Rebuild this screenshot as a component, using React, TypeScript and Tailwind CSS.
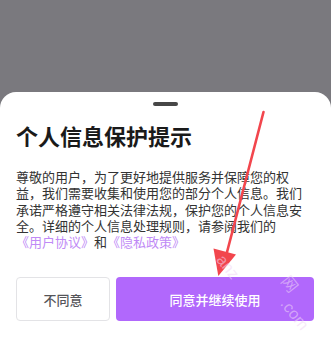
import React from "react";

export default function App() {
  return (
    <div
      className="relative w-[331px] h-[349px] overflow-hidden bg-[#7a797e] flex flex-col"
      style={{ fontFamily: '"Noto Sans CJK SC", "Noto Sans", sans-serif' }}
    >
      <div className="h-[92px] shrink-0" />
      <div className="flex-1 bg-white rounded-t-[16px] flex flex-col">
        <div className="mt-[10px] mx-auto w-[25px] h-[4px] rounded-full bg-[#474747]" />
        <h1 className="mt-[16px] px-[16px] text-[22px] leading-[26px] font-bold text-[#1a1a1a]">
          个人信息保护提示
        </h1>
        <div className="mt-[21px] pl-[16px] pr-[24px] text-[13px] leading-[16.3px] text-[#333333]">
          <p>
            尊敬的用户，为了更好地提供服务并保障您的权益，我们需要收集和使用您的部分个人信息。我们承诺严格遵守相关法律法规，保护您的个人信息安全。详细的个人信息处理规则，请参阅我们的
          </p>
          <div className="flex h-[16.3px] items-center">
            <span className="text-[#c08af6] leading-[16.3px]">《用户协议》</span>
            <span className="leading-[16.3px]">和</span>
            <span className="text-[#c08af6] leading-[16.3px]">《隐私政策》</span>
          </div>
        </div>
        <div className="mt-[27px] pl-[16px] pr-[17px] flex gap-[6px]">
          <button className="w-[94px] h-[44px] rounded-[4px] border border-[#e3e3e6] bg-white text-[13px] font-medium text-[#555559]">
            不同意
          </button>
          <button className="flex-1 h-[44px] rounded-[4px] bg-[#b168fc] text-[13px] font-medium text-white">
            同意并继续使用
          </button>
        </div>
      </div>

      <svg className="absolute inset-0 pointer-events-none" width="331" height="349" viewBox="0 0 331 349">
        <line x1="263.5" y1="112" x2="226" y2="256" stroke="#f2464d" strokeWidth="2.6" strokeLinecap="round" />
        <polygon points="218.3,276 213.5,248.5 236,254.5" fill="#f2464d" />
      </svg>

      <div className="absolute left-[226px] top-[252px] pointer-events-none text-[16px] leading-none text-[rgba(240,215,245,0.55)] rotate-[52deg] origin-top-left" style={{ fontFamily: '"Liberation Sans", sans-serif' }}>
        anz
      </div>
      <div className="absolute left-[292px] top-[272px] pointer-events-none text-[16px] leading-none text-[rgba(240,215,245,0.55)] rotate-[52deg] origin-top-left">
        网
      </div>
      <div className="absolute left-[290px] top-[296px] pointer-events-none text-[16px] leading-none text-[rgba(240,215,245,0.55)] rotate-[52deg] origin-top-left" style={{ fontFamily: '"Liberation Sans", sans-serif' }}>
        .com
      </div>
    </div>
  );
}
